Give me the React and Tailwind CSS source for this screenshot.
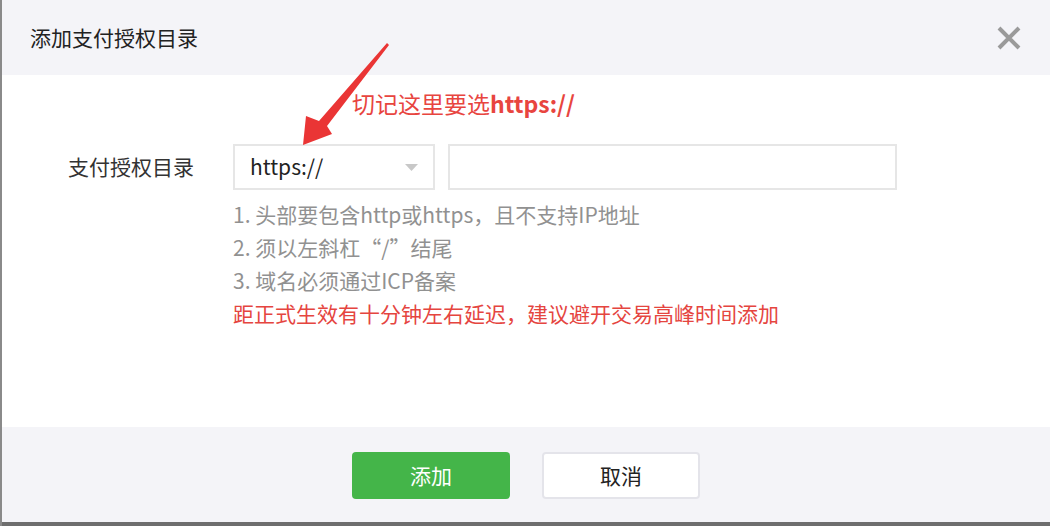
export default function App() {
  return (
    <div className="relative w-[1050px] h-[526px] flex flex-col border-l-2 border-[#8a8a8a] bg-white overflow-hidden font-['Noto_Sans_CJK_SC','Noto_Sans',sans-serif]">
      <header className="h-[75px] shrink-0 bg-[#f4f4f8] flex items-center justify-between pl-[28px] pr-[28px]">
        <h1 className="text-[21px] text-[#222]">添加支付授权目录</h1>
        <button className="w-[26px] h-[26px] flex items-center justify-center">
          <svg width="24" height="24" viewBox="0 0 24 24">
            <path d="M2 2 L22 22 M22 2 L2 22" stroke="#9a9a9a" strokeWidth="4" strokeLinecap="butt" />
          </svg>
        </button>
      </header>

      <main className="flex-1 bg-white">
        <p className="pt-[13px] pl-[350px] h-[69px] text-[23px] leading-[30px] text-[#e8453f]">
          切记这里要选<span className="font-bold">https://</span>
        </p>

        <div className="flex items-center">
          <label className="w-[231px] pl-[66px] text-[21px] text-[#333]">支付授权目录</label>
          <div className="w-[202px] h-[46px] border-2 border-[#e6e6e6] flex items-center justify-between pl-[15px] pr-[15px]">
            <span className="text-[21px] text-[#222]">https://</span>
            <svg width="13" height="7" viewBox="0 0 13 7">
              <path d="M0 0 L13 0 L6.5 7 Z" fill="#c8c8c8" />
            </svg>
          </div>
          <input className="ml-[13px] w-[449px] h-[46px] border-2 border-[#e6e6e6] outline-none" />
        </div>

        <div className="pl-[231px] mt-[8px] text-[21px] leading-[33px]">
          <p className="text-[#919191]">1. 头部要包含http或https，且不支持IP地址</p>
          <p className="text-[#919191]">2. 须以左斜杠“/”结尾</p>
          <p className="text-[#919191]">3. 域名必须通过ICP备案</p>
          <p className="text-[#e5453f]">距正式生效有十分钟左右延迟，建议避开交易高峰时间添加</p>
        </div>
      </main>

      <footer className="h-[95px] shrink-0 bg-[#f4f4f8] flex justify-center gap-[32px] pt-[25px]">
        <button className="w-[158px] h-[47px] rounded-[4px] bg-[#44b549] text-white text-[21px]">添加</button>
        <button className="w-[158px] h-[47px] rounded-[4px] bg-white border-2 border-[#e4e4ea] text-[#222] text-[21px]">取消</button>
      </footer>
      <div className="h-[4px] shrink-0 bg-[#6e6e6e]"></div>

      <svg className="absolute left-0 top-0 pointer-events-none" width="1050" height="526" viewBox="0 0 1050 526">
        <polygon points="385,43 387,45 325,126 330,134 301,145 304,116 317,121" fill="#ea3535" />
      </svg>
    </div>
  );
}
